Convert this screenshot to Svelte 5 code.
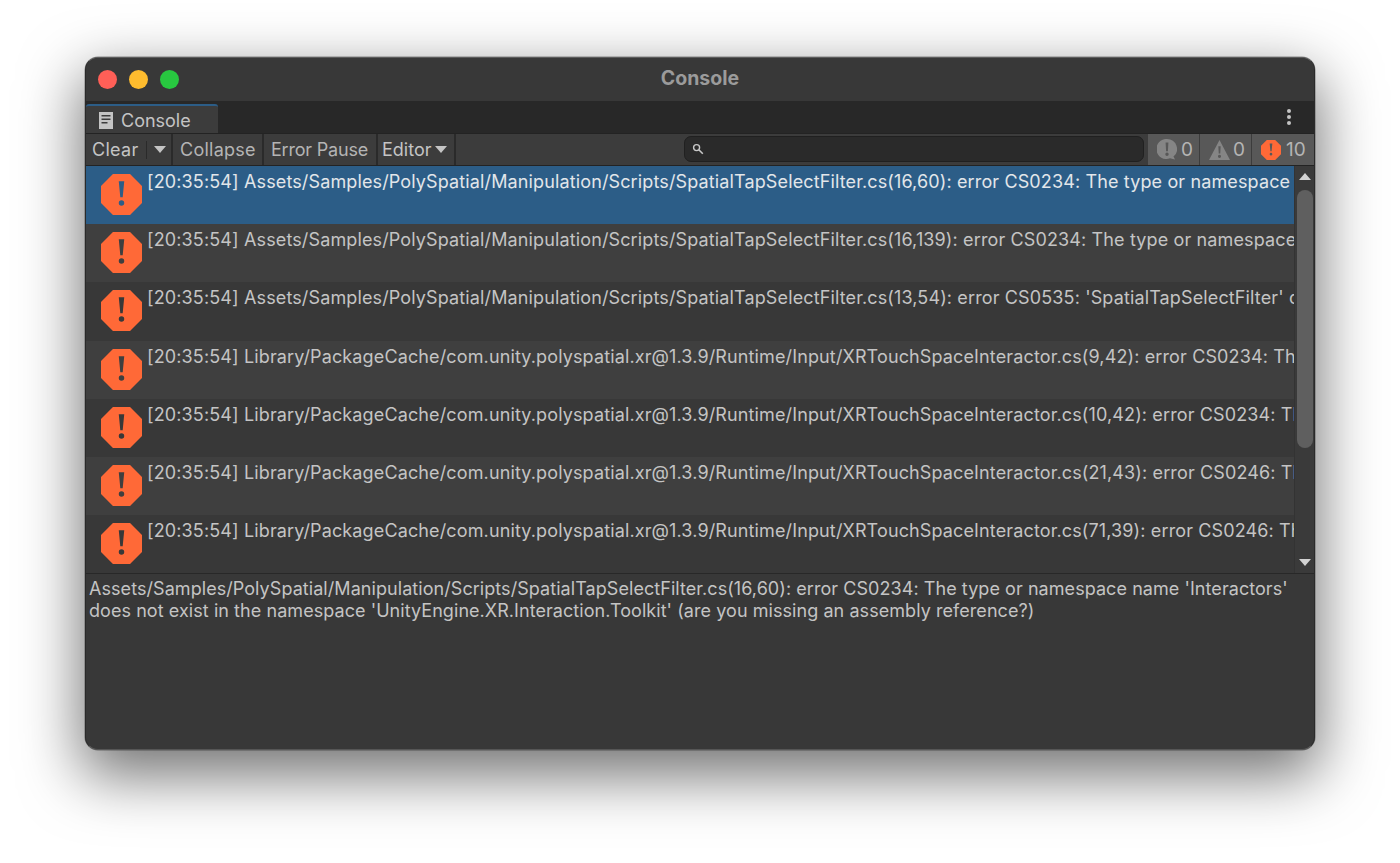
<script>
  const rows = [
    ["[20:35:54] Assets/Samples/PolySpatial/Manipulation/Scripts/SpatialTapSelectFilter.cs(16,60): error CS0234: The type or namespace name 'Interactors' does not exist", true],
    ["[20:35:54] Assets/Samples/PolySpatial/Manipulation/Scripts/SpatialTapSelectFilter.cs(16,139): error CS0234: The type or namespace name 'Interactors' does not exist", false],
    ["[20:35:54] Assets/Samples/PolySpatial/Manipulation/Scripts/SpatialTapSelectFilter.cs(13,54): error CS0535: 'SpatialTapSelectFilter' does not implement interface member", false],
    ["[20:35:54] Library/PackageCache/com.unity.polyspatial.xr@1.3.9/Runtime/Input/XRTouchSpaceInteractor.cs(9,42): error CS0234: The type or namespace name does not exist", false],
    ["[20:35:54] Library/PackageCache/com.unity.polyspatial.xr@1.3.9/Runtime/Input/XRTouchSpaceInteractor.cs(10,42): error CS0234: The type or namespace name does not exist", false],
    ["[20:35:54] Library/PackageCache/com.unity.polyspatial.xr@1.3.9/Runtime/Input/XRTouchSpaceInteractor.cs(21,43): error CS0246: The type or namespace name could not be found", false],
    ["[20:35:54] Library/PackageCache/com.unity.polyspatial.xr@1.3.9/Runtime/Input/XRTouchSpaceInteractor.cs(71,39): error CS0246: The type or namespace name could not be found", false]
  ];
  const octagon = "M7 0H17L24 7V17L17 24H7L0 17V7Z";
  const bang = "M10.400 4.200H13.600L12.700 13.600H11.300ZM12 15.400a1.600 1.600 0 1 1 0 3.200 1.600 1.600 0 0 1 0-3.200Z";
</script>

<div class="page">
  <div class="window">
    <header class="title">
      <div class="lights"><i class="red"></i><i class="yellow"></i><i class="green"></i></div>
      <span>Console</span>
    </header>

    <div class="tabbar">
      <div class="tab">
        <svg width="16" height="17" viewBox="0 0 16 17"><path fill="#c4c4c4" fill-rule="evenodd" d="M1 0h14v17H1zM3.500 3v1.600h9V3zM3.500 6.500v1.500h9V6.500zM3.500 10v1.500h6V10z"/></svg>
        <span>Console</span>
      </div>
      <div class="kebab"><b></b><b></b><b></b></div>
    </div>

    <div class="toolbar">
      <div class="btn clear"><span>Clear</span><em></em><s class="caret"></s></div>
      <div class="btn collapse">Collapse</div>
      <div class="btn pause">Error Pause</div>
      <div class="btn editor"><span>Editor</span><s class="caret"></s></div>
      <div class="search">
        <svg width="12" height="12" viewBox="0 0 12 12"><circle cx="4.600" cy="4.600" r="3" fill="none" stroke="#c8c8c8" stroke-width="1.400"/><path d="M6.800 6.800L10.800 10.800" stroke="#c8c8c8" stroke-width="1.600"/></svg>
      </div>
      <div class="count c1">
        <svg width="20" height="21" viewBox="0 0 20 21"><path fill="#858585" fill-rule="evenodd" d="M10 0a10 10 0 0 1 6.500 17.600L18 20.500l-5-1.200A10 10 0 1 1 10 0ZM8.600 3.500l.5 8.700h1.800l.5-8.700ZM10 13.500a1.700 1.700 0 1 0 0 3.400 1.700 1.700 0 0 0 0-3.400Z"/></svg>
        <span>0</span>
      </div>
      <div class="count c2">
        <svg width="21" height="20" viewBox="0 0 20 19"><path fill="#858585" fill-rule="evenodd" d="M10 0l10 19H0ZM8.900 6l.4 6.800h1.400l.4-6.800ZM10 14a1.500 1.500 0 1 0 0 3 1.500 1.500 0 0 0 0-3Z"/></svg>
        <span>0</span>
      </div>
      <div class="count c3">
        <svg width="20" height="20" viewBox="0 0 24 24"><path fill="#ff6937" fill-rule="evenodd" d="{octagon}{bang}"/></svg>
        <span>10</span>
      </div>
    </div>

    <div class="listwrap">
      <div class="list">
        {#each rows as r, i}
          <div class="row" class:selected={r[1]} class:odd={i % 2 === 1}>
            <svg class="rowicon" width="41" height="41" viewBox="0 0 24 24"><path fill="#ff6937" fill-rule="evenodd" d="{octagon}{bang}"/></svg>
            <div class="msg">{r[0]}</div>
          </div>
        {/each}
      </div>
      <div class="scroll">
        <s class="up"></s>
        <div class="track"><div class="thumb"></div></div>
        <s class="down"></s>
      </div>
    </div>

    <div class="detail">Assets/Samples/PolySpatial/Manipulation/Scripts/SpatialTapSelectFilter.cs(16,60): error CS0234: The type or namespace name 'Interactors' does not exist in the namespace 'UnityEngine.XR.Interaction.Toolkit' (are you missing an assembly reference?)</div>
  </div>
</div>

<style>
  :global(body) { margin: 0; background: #fff; }
  .page {
    width: 1400px; height: 863px; box-sizing: border-box;
    padding: 57px 85px 113px; overflow: hidden;
    font-family: Inter, "Liberation Sans", sans-serif;
    color: #c4c4c4;
  }
  .window {
    height: 693px; display: flex; flex-direction: column;
    background: #383838; border-radius: 13px; overflow: hidden;
    box-shadow: 0 22px 60px 4px rgba(0,0,0,.55), 0 0 0 .5px rgba(0,0,0,.4);
    box-sizing: border-box; border: 1px solid #2a2a2a; border-top-color: #5c5c5c; border-bottom-color: #565656;
  }
  .title {
    height: 43px; flex: none; background: #383838; position: relative;
    display: flex; align-items: center; justify-content: center; padding-bottom: 3px; box-sizing: border-box;
    font-size: 19.500px; font-weight: 700; color: #9b9b9b;
  }
  .lights { position: absolute; left: 12px; top: 12px; display: flex; gap: 12px; }
  .lights i { width: 19px; height: 19px; border-radius: 50%; display: block; }
  .red { background: #ff5f57; }
  .yellow { background: #febc2e; }
  .green { background: #28c840; }

  .tabbar { height: 32px; flex: none; background: #282828; display: flex; justify-content: space-between; align-items: stretch; }
  .tab {
    width: 132px; box-sizing: border-box; background: #3c3c3c; border-top: 2px solid #2c5d87; margin-top: 3px;
    border-radius: 3px 3px 0 0; display: flex; align-items: center; gap: 7px; padding: 1px 0 0 12px;
    font-size: 18px; color: #c4c4c4;
  }
  .kebab { width: 50px; display: flex; flex-direction: column; align-items: center; justify-content: center; gap: 2px; }
  .kebab b { width: 4px; height: 4px; border-radius: 50%; background: #c4c4c4; }

  .toolbar {
    height: 33px; flex: none; box-sizing: border-box; background: #3c3c3c;
    border-top: 1px solid #232323; border-bottom: 1px solid #232323;
    display: flex; align-items: stretch; font-size: 18px;
  }
  .btn { display: flex; align-items: center; box-sizing: border-box; border-right: 2px solid #2a2a2a; white-space: nowrap; background: #3c3c3c; }
  .clear { width: 87px; padding-left: 6px; letter-spacing: .3px; }
  .clear em { width: 1px; height: 18px; background: #2a2a2a; margin: 0 7px 0 7px; }
  .collapse { width: 91px; padding-left: 7px; color: #b4b4b4; letter-spacing: .25px; }
  .pause { width: 114px; padding-left: 7px; color: #b4b4b4; letter-spacing: -.2px; }
  .editor { width: 78px; padding-left: 4px; gap: 4px; }
  .caret { display: block; width: 0; height: 0; border: 6px solid transparent; border-bottom: 0; border-top: 7px solid #c4c4c4; }

  .search {
    flex: none; margin: 2px 0 3px 228px; width: 460px; box-sizing: border-box; background: #2a2a2a;
    border: 1px solid #202020; border-radius: 7px; display: flex; align-items: center; padding-left: 7px;
  }
  .count { background: #585858; display: flex; align-items: center; box-sizing: border-box; height: 100%; padding-left: 9px; font-size: 19px; color: #b4b4b4; }
  .c1 { width: 51px; margin-left: 4px; gap: 4px; }
  .c2 { width: 51px; margin-left: 1px; gap: 3px; }
  .c3 { flex: 1; margin-left: 1px; gap: 5px; }

  .listwrap { height: 408px; flex: none; display: flex; border-bottom: 1px solid #282828; box-sizing: border-box; }
  .list { flex: 1; overflow: hidden; min-width: 0; }
  .row { height: 58.200px; box-sizing: border-box; display: flex; background: #383838; overflow: hidden; }
  .row.odd { background: #3f3f3f; }
  .row.selected { background: #2c5d87; }
  .rowicon { flex: none; margin: 8px 6px 0 15px; }
  .msg { white-space: nowrap; font-size: 18px; letter-spacing: .13px; line-height: 20px; padding-top: 6px; margin-left: -1px; }
  .row.selected .msg { color: #e2e6ea; }

  .scroll { width: 20px; flex: none; background: #3a3a3a; display: flex; flex-direction: column; align-items: center; border-left: 1px solid #333; box-sizing: border-box; }
  .up, .down { display: block; flex: none; width: 0; height: 0; border: 6px solid transparent; }
  .up { border-top: 0; border-bottom: 7px solid #d2d2d2; margin-top: 7px; }
  .down { border-bottom: 0; border-top: 7px solid #d2d2d2; margin: 0 0 7px; }
  .track { flex: 1; width: 100%; padding: 10px 0 0 2px; box-sizing: border-box; }
  .thumb { width: 16px; height: 258px; background: #5f5f5f; border-radius: 8px; }

  .detail { flex: 1; padding: 4px 3px 0; font-size: 18px; letter-spacing: .06px; line-height: 22px; color: #c4c4c4; }
</style>
